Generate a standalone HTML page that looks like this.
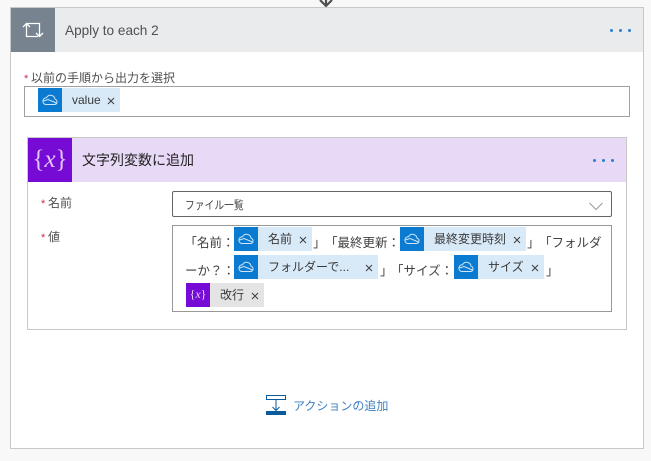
<!DOCTYPE html>
<html lang="ja">
<head>
<meta charset="utf-8">
<style>
html,body{margin:0;padding:0;width:651px;height:461px;overflow:hidden;background:#f8f8f8;font-family:"Liberation Sans","Noto Sans CJK JP",sans-serif;color:#333}
.a{position:absolute;white-space:nowrap}
.box{position:absolute;box-sizing:border-box}
.chip{position:absolute;height:24px;background:#d8e9f8;font-size:12px;line-height:24px;color:#3a3a3a;white-space:nowrap}
.chip.g{background:#e4e4e4}
.ci{position:absolute;left:0;top:0;width:24px;height:24px;background:#0a7bd0}
.ci svg{position:absolute;left:4px;top:5px}
.chip .t{position:absolute;top:0}
.chip .x{position:absolute;top:0;width:10px;height:24px}
.chip .x svg{position:absolute;left:1px;top:9px}
.l{position:absolute;font-size:12.5px;line-height:18px;color:#404040;white-space:nowrap}
.lab{position:absolute;font-size:12px;line-height:18px;color:#505050;white-space:nowrap}
.dots{position:absolute;width:22px;height:3px}
.dots i{position:absolute;top:0;width:3px;height:3px;border-radius:50%;background:#2a80cc}
.req{position:absolute;color:#c4314b;font-size:11px;line-height:18px}
</style>
</head>
<body>
<svg class="a" style="left:318px;top:0" width="16" height="8" viewBox="0 0 16 8"><path d="M2 0 L8 6 L14 0 M8 0 V6" fill="none" stroke="#505050" stroke-width="2.2"/></svg>

<div class="box" style="left:10px;top:7px;width:634px;height:442px;background:#fff;border:1px solid #c8c8c8"></div>
<div class="box" style="left:11px;top:8px;width:632px;height:44px;background:#eaebed"></div>
<div class="box" style="left:11px;top:8px;width:44px;height:44px;background:#77838f"></div>
<svg class="a" style="left:21px;top:21px" width="24" height="18" viewBox="0 0 24 18"><path d="M5.500 2.500 V15.500 H17 M2 6 L5.500 2.500 L9 6 M5.500 2.500 H18.500 V15.500 M15 12 L18.500 15.500 L22 12" fill="none" stroke="#fff" stroke-width="1.300"/></svg>
<div class="a" style="left:65px;top:22px;font-size:13.600px;line-height:18px;color:#505050">Apply to each 2</div>
<div class="dots" style="left:610px;top:29px"><i style="left:0"></i><i style="left:9px"></i><i style="left:18px"></i></div>

<div class="req" style="left:24px;top:70px">*</div>
<div class="lab" style="left:31px;top:69px">以前の手順から出力を選択</div>
<div class="box" style="left:24px;top:86px;width:606px;height:31px;background:#fff;border:1px solid #a0a0a0"></div>
<div class="chip" style="left:38px;top:88px;width:82px"><div class="ci"><svg width="16" height="14" viewBox="0 0 16 14"><path d="M3.500 11.500 H12.500 A2.700 2.700 0 0 0 13 6.200 A4.500 4.500 0 0 0 4.500 4.800 A3.400 3.400 0 0 0 3.500 11.500 Z M1.500 8 L6 6.500 L14.500 10" fill="none" stroke="#cfe6fa" stroke-width="1"/></svg></div><span class="t" style="left:34px">value</span><span class="x" style="left:68px"><svg width="8" height="8" viewBox="0 0 8 8"><path d="M1 1 L7 7 M7 1 L1 7" stroke="#444" stroke-width="1.100"/></svg></span></div>

<div class="box" style="left:27px;top:137px;width:600px;height:193px;background:#fff;border:1px solid #c8c8c8"></div>
<div class="box" style="left:28px;top:138px;width:598px;height:44px;background:#e8d9f7"></div>
<div class="box" style="left:28px;top:138px;width:44px;height:44px;background:#770bd6"></div>
<div class="a" style="left:28px;top:145px;width:44px;text-align:center;font-family:'Liberation Serif',serif;font-size:25px;line-height:30px;color:#e2c8f8">{<i>x</i>}</div>
<div class="a" style="left:82px;top:150px;font-size:14px;line-height:20px;color:#222">文字列変数に追加</div>
<div class="dots" style="left:593px;top:159px"><i style="left:0"></i><i style="left:9px"></i><i style="left:18px"></i></div>

<div class="req" style="left:41px;top:195px">*</div>
<div class="lab" style="left:48px;top:194px">名前</div>
<div class="box" style="left:172px;top:191px;width:440px;height:26px;background:#fff;border:1px solid #666;border-radius:2px"></div>
<div class="a" style="left:185px;top:197px;font-size:11.500px;line-height:18px;color:#444;transform:scaleX(.85);transform-origin:left center">ファイル一覧</div>
<svg class="a" style="left:589px;top:202px" width="14" height="9" viewBox="0 0 14 9"><path d="M.5 1 L7 7.500 L13.500 1" fill="none" stroke="#999" stroke-width="1"/></svg>

<div class="req" style="left:41px;top:229px">*</div>
<div class="lab" style="left:48px;top:228px">値</div>
<div class="box" style="left:172px;top:225px;width:440px;height:87px;background:#fff;border:1px solid #999"></div>

<div class="l" style="left:184.500px;top:234px">「名前：</div>
<div class="chip" style="left:234px;top:227px;width:78px"><div class="ci"><svg width="16" height="14" viewBox="0 0 16 14"><path d="M3.500 11.500 H12.500 A2.700 2.700 0 0 0 13 6.200 A4.500 4.500 0 0 0 4.500 4.800 A3.400 3.400 0 0 0 3.500 11.500 Z M1.500 8 L6 6.500 L14.500 10" fill="none" stroke="#cfe6fa" stroke-width="1"/></svg></div><span class="t" style="left:34px">名前</span><span class="x" style="left:64px"><svg width="8" height="8" viewBox="0 0 8 8"><path d="M1 1 L7 7 M7 1 L1 7" stroke="#444" stroke-width="1.100"/></svg></span></div>
<div class="l" style="left:313px;top:234px">」</div>
<div class="l" style="left:325px;top:234px">「最終更新：</div>
<div class="chip" style="left:400px;top:227px;width:126px"><div class="ci"><svg width="16" height="14" viewBox="0 0 16 14"><path d="M3.500 11.500 H12.500 A2.700 2.700 0 0 0 13 6.200 A4.500 4.500 0 0 0 4.500 4.800 A3.400 3.400 0 0 0 3.500 11.500 Z M1.500 8 L6 6.500 L14.500 10" fill="none" stroke="#cfe6fa" stroke-width="1"/></svg></div><span class="t" style="left:34px">最終変更時刻</span><span class="x" style="left:112px"><svg width="8" height="8" viewBox="0 0 8 8"><path d="M1 1 L7 7 M7 1 L1 7" stroke="#444" stroke-width="1.100"/></svg></span></div>
<div class="l" style="left:527px;top:234px">」</div>
<div class="l" style="left:539px;top:234px">「フォルダ</div>

<div class="l" style="left:185px;top:262px">ーか？：</div>
<div class="chip" style="left:234px;top:255px;width:144px"><div class="ci"><svg width="16" height="14" viewBox="0 0 16 14"><path d="M3.500 11.500 H12.500 A2.700 2.700 0 0 0 13 6.200 A4.500 4.500 0 0 0 4.500 4.800 A3.400 3.400 0 0 0 3.500 11.500 Z M1.500 8 L6 6.500 L14.500 10" fill="none" stroke="#cfe6fa" stroke-width="1"/></svg></div><span class="t" style="left:34px">フォルダーで...</span><span class="x" style="left:130px"><svg width="8" height="8" viewBox="0 0 8 8"><path d="M1 1 L7 7 M7 1 L1 7" stroke="#444" stroke-width="1.100"/></svg></span></div>
<div class="l" style="left:380px;top:262px">」</div>
<div class="l" style="left:391px;top:262px">「サイズ：</div>
<div class="chip" style="left:454px;top:255px;width:90px"><div class="ci"><svg width="16" height="14" viewBox="0 0 16 14"><path d="M3.500 11.500 H12.500 A2.700 2.700 0 0 0 13 6.200 A4.500 4.500 0 0 0 4.500 4.800 A3.400 3.400 0 0 0 3.500 11.500 Z M1.500 8 L6 6.500 L14.500 10" fill="none" stroke="#cfe6fa" stroke-width="1"/></svg></div><span class="t" style="left:34px">サイズ</span><span class="x" style="left:76px"><svg width="8" height="8" viewBox="0 0 8 8"><path d="M1 1 L7 7 M7 1 L1 7" stroke="#444" stroke-width="1.100"/></svg></span></div>
<div class="l" style="left:546px;top:262px">」</div>

<div class="chip g" style="left:186px;top:283px;width:78px"><div class="ci" style="background:#770bd6;color:#e6d2fa;font-family:'Liberation Serif',serif;font-size:12px;line-height:23px;text-align:center">{<i>x</i>}</div><span class="t" style="left:34px">改行</span><span class="x" style="left:64px"><svg width="8" height="8" viewBox="0 0 8 8"><path d="M1 1 L7 7 M7 1 L1 7" stroke="#444" stroke-width="1.100"/></svg></span></div>

<svg class="a" style="left:266px;top:394px" width="20" height="21" viewBox="0 0 20 21"><rect x="0.500" y="1.500" width="19" height="4" fill="#fff" stroke="#0a5a9e"/><path d="M10 6 V16 M6.500 13 L10 16.500 L13.500 13" fill="none" stroke="#0a5a9e" stroke-width="1"/><rect x="0" y="17" width="20" height="4" fill="#0a5a9e"/></svg>
<div class="a" style="left:293px;top:397px;font-size:12px;line-height:18px;color:#3d80c2">アクションの追加</div>
</body>
</html>
